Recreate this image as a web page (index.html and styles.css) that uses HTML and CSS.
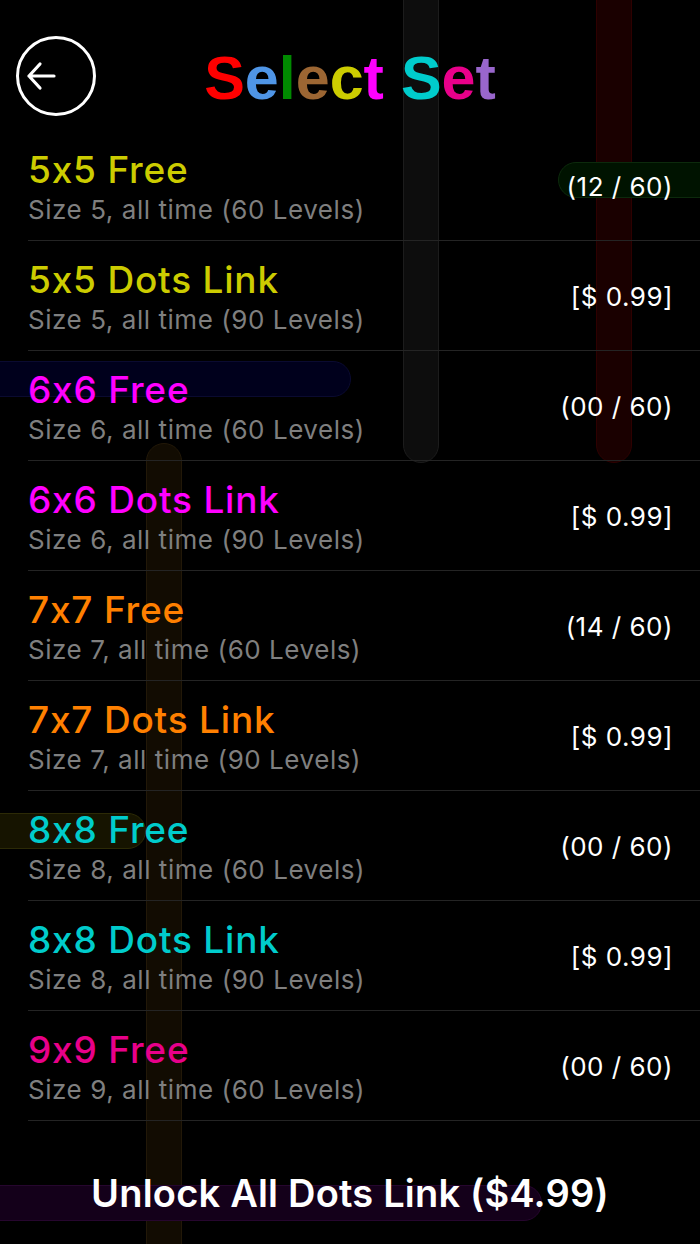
FILE: index.html
```html
<!DOCTYPE html>
<html>
  <head>
    <title>Select Set</title>
    <link rel="stylesheet" href="styles.css">
  </head>
  <body>
    <div class="screen">
      <!-- faint pipes drawn behind everything -->
      <div class="pipes">
        <div class="pipe gray-v"></div>
        <div class="pipe red-v"></div>
        <div class="pipe green-h"></div>
        <div class="pipe blue-h"></div>
        <div class="pipe brown-v"></div>
        <div class="pipe olive-h"></div>
        <div class="pipe purple-h"></div>
      </div>

      <header class="header">
        <button class="back" aria-label="Back">
          <svg width="82" height="82" viewBox="0 0 82 82">
            <circle cx="41" cy="41" r="38.5" fill="none" stroke="#fff" stroke-width="3" />
            <path d="M14 41 H39 M14 41 L25 29 M14 41 L25 53" fill="none" stroke="#fff" stroke-width="3.2" stroke-linecap="round" stroke-linejoin="round" />
          </svg>
        </button>
        <h1 class="title">
          <span class="c-red">S</span><span class="c-blue">e</span><span class="c-green">l</span><span class="c-brown">e</span><span class="c-yellow">c</span><span class="c-magenta">t</span>
          <span class="c-cyan">S</span><span class="c-pink">e</span><span class="c-purple">t</span>
        </h1>
      </header>

      <ul class="sets">
        <li class="set">
          <div class="info">
            <div class="name c-yellow">5x5 Free</div>
            <div class="desc">Size 5, all time (60 Levels)</div>
          </div>
          <div class="status">(12 / 60)</div>
        </li>
        <li class="set">
          <div class="info">
            <div class="name c-yellow">5x5 Dots Link</div>
            <div class="desc">Size 5, all time (90 Levels)</div>
          </div>
          <div class="status">[$ 0.99]</div>
        </li>
        <li class="set">
          <div class="info">
            <div class="name c-magenta">6x6 Free</div>
            <div class="desc">Size 6, all time (60 Levels)</div>
          </div>
          <div class="status">(00 / 60)</div>
        </li>
        <li class="set">
          <div class="info">
            <div class="name c-magenta">6x6 Dots Link</div>
            <div class="desc">Size 6, all time (90 Levels)</div>
          </div>
          <div class="status">[$ 0.99]</div>
        </li>
        <li class="set">
          <div class="info">
            <div class="name c-orange">7x7 Free</div>
            <div class="desc">Size 7, all time (60 Levels)</div>
          </div>
          <div class="status">(14 / 60)</div>
        </li>
        <li class="set">
          <div class="info">
            <div class="name c-orange">7x7 Dots Link</div>
            <div class="desc">Size 7, all time (90 Levels)</div>
          </div>
          <div class="status">[$ 0.99]</div>
        </li>
        <li class="set">
          <div class="info">
            <div class="name c-cyan">8x8 Free</div>
            <div class="desc">Size 8, all time (60 Levels)</div>
          </div>
          <div class="status">(00 / 60)</div>
        </li>
        <li class="set">
          <div class="info">
            <div class="name c-cyan">8x8 Dots Link</div>
            <div class="desc">Size 8, all time (90 Levels)</div>
          </div>
          <div class="status">[$ 0.99]</div>
        </li>
        <li class="set">
          <div class="info">
            <div class="name c-pink">9x9 Free</div>
            <div class="desc">Size 9, all time (60 Levels)</div>
          </div>
          <div class="status">(00 / 60)</div>
        </li>
      </ul>

      <div class="unlock">Unlock All Dots Link ($4.99)</div>
    </div>
  </body>
</html>
```

FILE: styles.css
```css
body {
  margin: 0;
  background-color: #000;
  color: #fff;
  font-family: "Inter", "Roboto", sans-serif;
}

.screen {
  position: relative;
  width: 700px;
  height: 1244px;
  overflow: hidden;
}

/* background pipes */
.pipes {
  position: absolute;
  inset: 0;
  z-index: 0;
}

.pipe {
  position: absolute;
  border-radius: 18px;
  box-sizing: border-box;
  border: 1px solid;
}

.gray-v {
  left: 403px;
  top: -40px;
  width: 36px;
  height: 503px;
  background-color: #0d0d0d;
  border-color: #1c1c1c;
}

.red-v {
  left: 596px;
  top: -40px;
  width: 36px;
  height: 503px;
  background-color: #1a0000;
  border-color: #2e0000;
}

.green-h {
  left: 558px;
  top: 162px;
  width: 180px;
  height: 36px;
  background-color: #001300;
  border-color: #0c2a0c;
}

.blue-h {
  left: -40px;
  top: 361px;
  width: 391px;
  height: 36px;
  background-color: #00001c;
  border-color: #0a0a30;
}

.brown-v {
  left: 146px;
  top: 443px;
  width: 36px;
  height: 850px;
  background-color: #120c02;
  border-color: #221808;
}

.olive-h {
  left: -40px;
  top: 813px;
  width: 186px;
  height: 36px;
  background-color: #161400;
  border-color: #2c2a06;
}

.purple-h {
  left: -40px;
  top: 1185px;
  width: 582px;
  height: 36px;
  background-color: #14001a;
  border-color: #26062e;
}

/* header */
.header {
  position: relative;
  z-index: 1;
  height: 131px;
  box-sizing: border-box;
  padding-top: 24px;
  display: flex;
  align-items: center;
  justify-content: center;
}

.back {
  position: absolute;
  left: 15px;
  top: 35px;
  padding: 0;
  border: none;
  background: none;
  line-height: 0;
}

.title {
  margin: 0;
  font-family: "Liberation Sans", Arial, sans-serif;
  font-weight: bold;
  font-size: 61px;
}

.c-red { color: #ff0000; }
.c-blue { color: #4f95e6; }
.c-green { color: #008a00; }
.c-brown { color: #9c6633; }
.c-yellow { color: #cccc00; }
.c-magenta { color: #ff00ff; }
.c-cyan { color: #00cccc; }
.c-pink { color: #e8008a; }
.c-purple { color: #9966cc; }
.c-orange { color: #ff8000; }

/* list */
.sets {
  position: relative;
  z-index: 1;
  list-style: none;
  margin: 0;
  padding: 0 0 0 28px;
}

.set {
  height: 110px;
  box-sizing: border-box;
  display: flex;
  align-items: center;
  justify-content: space-between;
  padding: 0 27px 0 0;
  border-bottom: 1px solid #242424;
}

.info {
  margin-top: 8px;
}

.name {
  font-size: 37px;
  font-weight: 500;
  line-height: 40px;
  letter-spacing: 0.8px;
}

.desc {
  font-size: 26px;
  line-height: 40px;
  color: #7f7f7f;
  letter-spacing: 0.55px;
}

.status {
  font-size: 26px;
  letter-spacing: 0.5px;
  margin-top: 2px;
}

.unlock {
  position: relative;
  z-index: 1;
  margin-top: 49px;
  text-align: center;
  font-size: 38px;
  font-weight: 600;
  letter-spacing: 0.2px;
}
```
